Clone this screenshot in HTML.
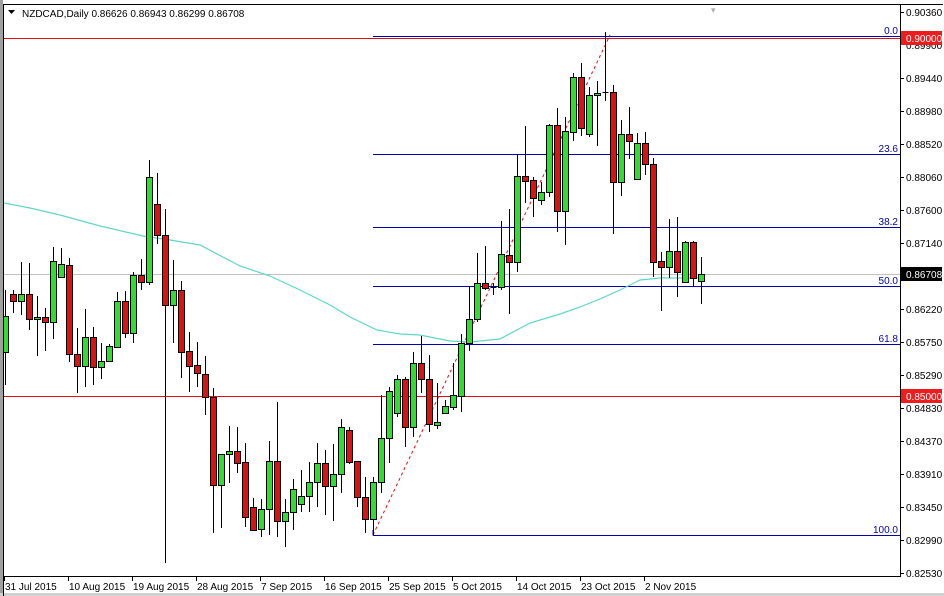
<!DOCTYPE html>
<html><head><meta charset="utf-8"><style>
html,body{margin:0;padding:0;background:#fff;}
svg{display:block;font-family:"Liberation Sans",Tahoma,sans-serif;}
</style></head><body>
<svg width="944" height="596" viewBox="0 0 944 596" xmlns="http://www.w3.org/2000/svg">
<rect x="0" y="0" width="944" height="596" fill="#fff"/>
<rect x="0" y="0" width="3" height="596" fill="#a0a0a0"/>
<rect x="0" y="593" width="944" height="3" fill="#d0d0d0"/>
<path d="M3.5 596V4.5H943" stroke="#000" fill="none"/>
<text x="711" y="13" font-size="9" fill="#aaa">▾</text>
<clipPath id="c"><rect x="4" y="5" width="896" height="571"/></clipPath>
<g clip-path="url(#c)" shape-rendering="crispEdges">
<path d="M4 38.5H900M4 396.5H900" stroke="#e01010"/>
<path d="M4 274.5H900" stroke="#c0c0c0"/>
<path d="M373 36.5H900M373 154.5H900M373 227.5H900M373 286.5H900M373 344.5H900M373 535.5H900" stroke="#0000b0"/>
<path d="M373 535.5V530" stroke="#0000b0"/>
</g>
<g clip-path="url(#c)">
<polyline fill="none" stroke="#5fd6c8" stroke-width="1.2" points="4,203 30,208 60,215 100,226 143,236 170,240 200,245 240,266 270,276 300,290 330,305 350,317 377,330 400,334 420,335 450,341 470,342 500,339 530,323 560,314 580,307 600,299 620,290 640,280 660,278 690,278 703,277"/>
<path d="M373 535L610 35" stroke="#e01010" stroke-dasharray="3,3" fill="none"/>
<path stroke="#000" stroke-width="1" fill="none" shape-rendering="crispEdges" d="M5.5 290V385M13.5 290V313M21.5 262V315M29.5 263V330M37.5 296V356M45.5 308V351M53.5 247V339M61.5 248V277M69.5 258V362M77.5 328V393M85.5 309V387M93.5 327V385M101.5 343V379M109.5 344V362M117.5 292V348M125.5 291V338M133.5 272V343M141.5 259V290M149.5 160V285M157.5 173V244M165.5 209V563M173.5 260V343M181.5 281V378M189.5 332V392M197.5 342V387M205.5 356V415M213.5 388V533M221.5 454V528M229.5 426V483M237.5 427V473M245.5 443V527M253.5 498V531M261.5 499V537M269.5 441V535M277.5 402V537M285.5 499V547M293.5 479V530M301.5 470V512M309.5 462V512M317.5 443V507M325.5 450V515M333.5 444V521M341.5 419V493M349.5 427V464M357.5 461V507M365.5 477V533M373.5 477V535M381.5 395V493M389.5 387V463M397.5 375V417M405.5 377V447M413.5 352V437M421.5 336V393M429.5 355V432M437.5 383V429M445.5 400V413M453.5 363V410M461.5 334V412M469.5 287V351M477.5 253V322M485.5 246V290M493.5 283V295M501.5 221V290M509.5 209V314M517.5 154V272M525.5 126V203M533.5 177V217M541.5 182V205M549.5 124V197M557.5 108V232M565.5 117V245M573.5 73V141M581.5 63V136M589.5 87V137M597.5 81V146M605.5 32V101M613.5 85V234M621.5 120V196M629.5 107V159M637.5 133V180M645.5 132V175M653.5 158V277M661.5 252V311M669.5 219V278M677.5 217V297M685.5 241V282M693.5 241V287M701.5 257V304M490.5 287.5H496.5M602.5 92.5H608.5"/>
<g fill="#2ee02e" stroke="#000" shape-rendering="crispEdges">
<rect x="2.5" y="316.5" width="6" height="36"/>
<rect x="18.5" y="294.5" width="6" height="7"/>
<rect x="34.5" y="317.5" width="6" height="2"/>
<rect x="50.5" y="261.5" width="6" height="61"/>
<rect x="58.5" y="264.5" width="6" height="13"/>
<rect x="82.5" y="337.5" width="6" height="29"/>
<rect x="98.5" y="361.5" width="6" height="6"/>
<rect x="106.5" y="346.5" width="6" height="15"/>
<rect x="114.5" y="301.5" width="6" height="46"/>
<rect x="130.5" y="275.5" width="6" height="58"/>
<rect x="146.5" y="177.5" width="6" height="105"/>
<rect x="170.5" y="290.5" width="6" height="15"/>
<rect x="218.5" y="454.5" width="6" height="31"/>
<rect x="226.5" y="451.5" width="6" height="3"/>
<rect x="258.5" y="509.5" width="6" height="20"/>
<rect x="266.5" y="461.5" width="6" height="48"/>
<rect x="282.5" y="512.5" width="6" height="9"/>
<rect x="290.5" y="489.5" width="6" height="23"/>
<rect x="298.5" y="496.5" width="6" height="8"/>
<rect x="306.5" y="482.5" width="6" height="14"/>
<rect x="314.5" y="463.5" width="6" height="19"/>
<rect x="330.5" y="474.5" width="6" height="12"/>
<rect x="338.5" y="427.5" width="6" height="47"/>
<rect x="370.5" y="482.5" width="6" height="37"/>
<rect x="378.5" y="438.5" width="6" height="44"/>
<rect x="386.5" y="391.5" width="6" height="47"/>
<rect x="394.5" y="379.5" width="6" height="34"/>
<rect x="410.5" y="363.5" width="6" height="64"/>
<rect x="434.5" y="422.5" width="6" height="3"/>
<rect x="442.5" y="406.5" width="6" height="7"/>
<rect x="450.5" y="395.5" width="6" height="12"/>
<rect x="458.5" y="343.5" width="6" height="53"/>
<rect x="466.5" y="319.5" width="6" height="24"/>
<rect x="474.5" y="283.5" width="6" height="36"/>
<rect x="498.5" y="254.5" width="6" height="33"/>
<rect x="514.5" y="176.5" width="6" height="86"/>
<rect x="538.5" y="192.5" width="6" height="8"/>
<rect x="546.5" y="125.5" width="6" height="67"/>
<rect x="562.5" y="131.5" width="6" height="80"/>
<rect x="570.5" y="77.5" width="6" height="55"/>
<rect x="586.5" y="95.5" width="6" height="39"/>
<rect x="594.5" y="93.5" width="6" height="2"/>
<rect x="618.5" y="134.5" width="6" height="48"/>
<rect x="634.5" y="143.5" width="6" height="36"/>
<rect x="666.5" y="251.5" width="6" height="16"/>
<rect x="682.5" y="242.5" width="6" height="40"/>
<rect x="698.5" y="274.5" width="6" height="7"/>
</g>
<g fill="#e01010" stroke="#000" shape-rendering="crispEdges">
<rect x="10.5" y="294.5" width="6" height="7"/>
<rect x="26.5" y="294.5" width="6" height="25"/>
<rect x="42.5" y="317.5" width="6" height="5"/>
<rect x="66.5" y="265.5" width="6" height="89"/>
<rect x="74.5" y="354.5" width="6" height="12"/>
<rect x="90.5" y="337.5" width="6" height="30"/>
<rect x="122.5" y="301.5" width="6" height="32"/>
<rect x="138.5" y="275.5" width="6" height="7"/>
<rect x="154.5" y="204.5" width="6" height="31"/>
<rect x="162.5" y="235.5" width="6" height="70"/>
<rect x="178.5" y="290.5" width="6" height="62"/>
<rect x="186.5" y="351.5" width="6" height="15"/>
<rect x="194.5" y="365.5" width="6" height="8"/>
<rect x="202.5" y="374.5" width="6" height="23"/>
<rect x="210.5" y="397.5" width="6" height="88"/>
<rect x="234.5" y="451.5" width="6" height="12"/>
<rect x="242.5" y="462.5" width="6" height="55"/>
<rect x="250.5" y="507.5" width="6" height="23"/>
<rect x="274.5" y="461.5" width="6" height="60"/>
<rect x="322.5" y="463.5" width="6" height="23"/>
<rect x="346.5" y="430.5" width="6" height="32"/>
<rect x="354.5" y="461.5" width="6" height="36"/>
<rect x="362.5" y="497.5" width="6" height="22"/>
<rect x="402.5" y="379.5" width="6" height="48"/>
<rect x="418.5" y="363.5" width="6" height="16"/>
<rect x="426.5" y="379.5" width="6" height="45"/>
<rect x="482.5" y="283.5" width="6" height="5"/>
<rect x="506.5" y="255.5" width="6" height="7"/>
<rect x="522.5" y="176.5" width="6" height="5"/>
<rect x="530.5" y="180.5" width="6" height="18"/>
<rect x="554.5" y="125.5" width="6" height="86"/>
<rect x="578.5" y="77.5" width="6" height="51"/>
<rect x="610.5" y="92.5" width="6" height="90"/>
<rect x="626.5" y="134.5" width="6" height="7"/>
<rect x="642.5" y="143.5" width="6" height="21"/>
<rect x="650.5" y="164.5" width="6" height="98"/>
<rect x="658.5" y="261.5" width="6" height="6"/>
<rect x="674.5" y="251.5" width="6" height="21"/>
<rect x="690.5" y="242.5" width="6" height="36"/>
</g>
</g>
<g font-size="10" fill="#0000b0" text-anchor="end">
<text x="898" y="34">0.0</text>
<text x="898" y="152">23.6</text>
<text x="898" y="225">38.2</text>
<text x="898" y="284">50.0</text>
<text x="898" y="342">61.8</text>
<text x="898" y="533">100.0</text>
</g>
<text x="22" y="17" font-size="10" fill="#000">NZDCAD,Daily  0.86626 0.86943 0.86299 0.86708</text>
<path d="M8 10H15L11.5 14Z" fill="#000"/>
<path d="M900.5 4V577M3.5 576.5H900.5" stroke="#000" fill="none" shape-rendering="crispEdges"/>
<g stroke="#000" shape-rendering="crispEdges">
<path d="M900 12.5H904M900 78.5H904M900 111.5H904M900 144.5H904M900 177.5H904M900 210.5H904M900 243.5H904M900 309.5H904M900 342.5H904M900 375.5H904M900 408.5H904M900 441.5H904M900 474.5H904M900 507.5H904M900 540.5H904M900 573.5H904"/>
<path d="M4.5 577V581M68.5 577V581M132.5 577V581M196.5 577V581M260.5 577V581M324.5 577V581M388.5 577V581M452.5 577V581M516.5 577V581M580.5 577V581M644.5 577V581"/>
</g>
<g font-size="10" fill="#000">
<text x="906" y="16">0.90360</text>
<text x="906" y="49">0.89900</text>
<text x="906" y="82">0.89440</text>
<text x="906" y="115">0.88980</text>
<text x="906" y="148">0.88520</text>
<text x="906" y="181">0.88060</text>
<text x="906" y="214">0.87600</text>
<text x="906" y="247">0.87140</text>
<text x="906" y="313">0.86220</text>
<text x="906" y="346">0.85750</text>
<text x="906" y="379">0.85290</text>
<text x="906" y="412">0.84830</text>
<text x="906" y="445">0.84370</text>
<text x="906" y="478">0.83910</text>
<text x="906" y="511">0.83450</text>
<text x="906" y="544">0.82990</text>
<text x="906" y="577">0.82530</text>
</g>
<rect x="901" y="31" width="41" height="14" fill="#ee1c1c"/>
<text x="906" y="42" font-size="10" fill="#fff">0.90000</text>
<rect x="901" y="389" width="41" height="14" fill="#ee1c1c"/>
<text x="906" y="400" font-size="10" fill="#fff">0.85000</text>
<rect x="901" y="267" width="41" height="14" fill="#000"/>
<text x="906" y="278" font-size="10" fill="#fff">0.86708</text>
<g font-size="10" fill="#000">
<text x="5" y="590">31 Jul 2015</text>
<text x="69" y="590">10 Aug 2015</text>
<text x="133" y="590">19 Aug 2015</text>
<text x="197" y="590">28 Aug 2015</text>
<text x="261" y="590">7 Sep 2015</text>
<text x="325" y="590">16 Sep 2015</text>
<text x="389" y="590">25 Sep 2015</text>
<text x="453" y="590">5 Oct 2015</text>
<text x="517" y="590">14 Oct 2015</text>
<text x="581" y="590">23 Oct 2015</text>
<text x="645" y="590">2 Nov 2015</text>
</g>
</svg>
</body></html>
